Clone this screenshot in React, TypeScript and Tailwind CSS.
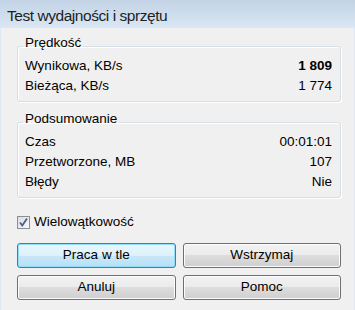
import React from "react";

const Row = ({ label, value, bold }: { label: string; value: string; bold?: boolean }) => (
  <div className="flex justify-between h-[20px] leading-[20px]">
    <span>{label}</span>
    <span className={bold ? "font-bold" : ""}>{value}</span>
  </div>
);

const Group = ({ title, children, className }: { title: string; children: React.ReactNode; className?: string }) => (
  <fieldset
    className={`border border-[#d5dfe5] rounded-[3px] pl-[7px] pr-[8px] pb-[5px] shadow-[inset_1px_1px_0_#fff,1px_1px_0_#fff] ${className ?? ""}`}
  >
    <legend className="-ml-[2px] px-[2px] leading-[14px] pb-[6px]">{title}</legend>
    {children}
  </fieldset>
);

const Button = ({ label, primary }: { label: string; primary?: boolean }) => (
  <button
    className={
      primary
        ? "h-[25px] rounded-[3px] border border-[#3c7fb1] shadow-[inset_0_0_0_1px_#8fdcfb] bg-[linear-gradient(to_bottom,#eaf6fd_0%,#dcf1fc_50%,#c9e8f9_50%,#b7dff5_100%)] text-black"
        : "h-[25px] rounded-[3px] border border-[#707070] shadow-[inset_0_0_0_1px_#fcfcfc] bg-[linear-gradient(to_bottom,#f2f2f2_0%,#ebebeb_50%,#dddddd_50%,#cfcfcf_100%)] text-black"
    }
  >
    {label}
  </button>
);

export default function App() {
  return (
    <div
      className="w-[355px] h-[310px] flex flex-col text-black text-[13.5px]"
      style={{ fontFamily: '"Liberation Sans", Arial, sans-serif' }}
    >
      <div className="h-[28px] bg-gradient-to-b from-[#c2d3e5] to-[#dae7f5] pl-[7px] pt-[6px] text-[15.5px] tracking-[-0.45px] text-[#1e1e1e] leading-[20px]">
        Test wydajności i sprzętu
      </div>
      <div className="flex-1 bg-[#f0f0f0] border-x border-[#dfe8f3] pl-[16px] pr-[13px] pt-[8px] flex flex-col">
        <Group title="Prędkość">
          <Row label="Wynikowa, KB/s" value="1 809" bold />
          <Row label="Bieżąca, KB/s" value="1 774" />
        </Group>
        <Group title="Podsumowanie" className="mt-[10px]">
          <Row label="Czas" value="00:01:01" />
          <Row label="Przetworzone, MB" value="107" />
          <Row label="Błędy" value="Nie" />
        </Group>
        <label className="mt-[14px] flex items-center h-[20px] gap-[4px]">
          <span className="w-[13px] h-[13px] border border-[#8e8f8f] bg-[linear-gradient(135deg,#dcdcdc,#fafafa)] flex items-center justify-center">
            <svg width="11" height="11" viewBox="0 0 11 11">
              <path d="M2 5.5 L4.3 8.5 L9 1.5" fill="none" stroke="#4a5f97" strokeWidth="1.8" />
            </svg>
          </span>
          <span className="leading-[20px]">Wielowątkowość</span>
        </label>
        <div className="mt-[11px] grid grid-cols-2 gap-x-[7px] gap-y-[7px]">
          <Button label="Praca w tle" primary />
          <Button label="Wstrzymaj" />
          <Button label="Anuluj" />
          <Button label="Pomoc" />
        </div>
      </div>
    </div>
  );
}
